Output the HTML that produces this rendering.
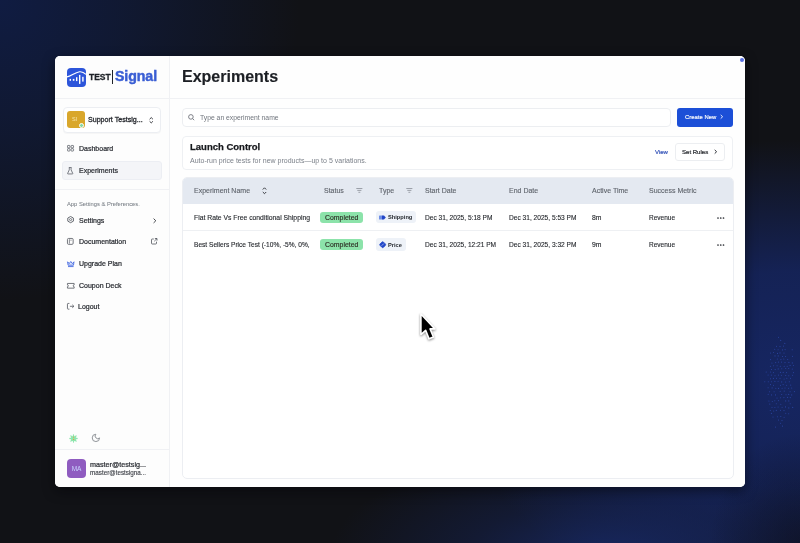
<!DOCTYPE html>
<html><head><meta charset="utf-8">
<style>
*{box-sizing:border-box;margin:0;padding:0}
html,body{width:800px;height:543px;overflow:hidden}
body{font-family:"Liberation Sans",sans-serif;position:relative;background:#111216;color:#25282d}
.bg{position:absolute;inset:0;
background:
radial-gradient(ellipse 90px 110px at 800px 543px, rgba(12,14,28,0.6) 0%, rgba(12,14,28,0) 100%),
radial-gradient(ellipse 300px 300px at 0px 0px, rgba(16,28,66,1) 0%, rgba(16,27,60,0.75) 40%, rgba(17,18,22,0) 100%),
radial-gradient(ellipse 280px 110px at 610px 555px, rgba(24,42,105,0.85) 0%, rgba(22,38,95,0.4) 50%, rgba(22,38,95,0) 100%),
radial-gradient(ellipse 330px 240px at 790px 380px, rgba(22,38,98,1) 0%, rgba(21,36,92,0.9) 45%, rgba(17,18,22,0) 100%),
#111216}
.card{position:absolute;left:55px;top:56px;width:690px;height:431px;background:#fff;border-radius:5px;overflow:hidden;box-shadow:0 4px 12px rgba(5,6,10,0.55)}
.a{position:absolute;white-space:nowrap;line-height:1;will-change:transform}
.side{position:absolute;left:0;top:0;width:115px;height:431px;background:#fdfdfd;border-right:1px solid #f0f1f4}
.hl{position:absolute;height:1px;background:#f0f1f4}
.nav{font-size:7px;color:#2a2d33;-webkit-text-stroke:0.22px #2a2d33;left:23.7px}
.ico{position:absolute;overflow:visible}
.main{position:absolute;left:115px;top:0;width:575px;height:431px;background:#fefefe}
.th{font-size:7px;color:#5f646c;-webkit-text-stroke:0.12px #5f646c;top:131.1px}
.td{font-size:6.8px;color:#26292e;-webkit-text-stroke:0.12px #26292e}
.badge{position:absolute;border-radius:3px}
</style></head>
<body>
<div class="bg"></div>
<svg class="ico" style="left:760px;top:330px" width="40" height="110" viewBox="0 0 40 110"><g fill="rgba(62,98,220,0.5)"><circle cx="18.5" cy="7.3" r="0.55"/><circle cx="20.7" cy="10.4" r="0.55"/><circle cx="24.8" cy="13.4" r="0.55"/><circle cx="16.5" cy="16.3" r="0.55"/><circle cx="20.0" cy="16.6" r="0.55"/><circle cx="23.4" cy="16.1" r="0.55"/><circle cx="14.7" cy="19.3" r="0.55"/><circle cx="18.1" cy="19.7" r="0.55"/><circle cx="22.4" cy="19.9" r="0.55"/><circle cx="25.1" cy="19.6" r="0.55"/><circle cx="32.2" cy="19.8" r="0.55"/><circle cx="10.6" cy="23.0" r="0.55"/><circle cx="13.6" cy="22.5" r="0.55"/><circle cx="17.5" cy="23.4" r="0.55"/><circle cx="20.0" cy="22.9" r="0.55"/><circle cx="24.0" cy="23.0" r="0.55"/><circle cx="15.0" cy="25.9" r="0.55"/><circle cx="18.2" cy="25.9" r="0.55"/><circle cx="22.5" cy="26.5" r="0.55"/><circle cx="25.6" cy="26.5" r="0.55"/><circle cx="32.5" cy="26.2" r="0.55"/><circle cx="10.6" cy="29.6" r="0.55"/><circle cx="17.3" cy="29.0" r="0.55"/><circle cx="20.9" cy="29.6" r="0.55"/><circle cx="23.8" cy="29.0" r="0.55"/><circle cx="27.7" cy="29.5" r="0.55"/><circle cx="11.9" cy="33.0" r="0.55"/><circle cx="15.7" cy="32.6" r="0.55"/><circle cx="18.6" cy="32.1" r="0.55"/><circle cx="21.6" cy="32.1" r="0.55"/><circle cx="25.0" cy="32.6" r="0.55"/><circle cx="28.9" cy="32.4" r="0.55"/><circle cx="32.3" cy="32.9" r="0.55"/><circle cx="10.4" cy="36.2" r="0.55"/><circle cx="13.6" cy="35.8" r="0.55"/><circle cx="17.1" cy="35.8" r="0.55"/><circle cx="20.3" cy="36.2" r="0.55"/><circle cx="24.2" cy="36.2" r="0.55"/><circle cx="27.2" cy="36.2" r="0.55"/><circle cx="30.1" cy="35.4" r="0.55"/><circle cx="33.4" cy="35.5" r="0.55"/><circle cx="11.5" cy="39.5" r="0.55"/><circle cx="15.2" cy="39.5" r="0.55"/><circle cx="18.2" cy="38.9" r="0.55"/><circle cx="21.8" cy="38.7" r="0.55"/><circle cx="25.7" cy="38.5" r="0.55"/><circle cx="28.7" cy="38.5" r="0.55"/><circle cx="32.3" cy="39.0" r="0.55"/><circle cx="6.2" cy="42.0" r="0.55"/><circle cx="10.4" cy="42.0" r="0.55"/><circle cx="13.4" cy="42.6" r="0.55"/><circle cx="20.4" cy="42.4" r="0.55"/><circle cx="23.2" cy="42.4" r="0.55"/><circle cx="26.6" cy="42.6" r="0.55"/><circle cx="33.4" cy="42.6" r="0.55"/><circle cx="8.1" cy="45.0" r="0.55"/><circle cx="11.3" cy="45.1" r="0.55"/><circle cx="15.0" cy="45.7" r="0.55"/><circle cx="18.6" cy="45.1" r="0.55"/><circle cx="21.4" cy="45.2" r="0.55"/><circle cx="25.7" cy="45.5" r="0.55"/><circle cx="28.8" cy="45.8" r="0.55"/><circle cx="32.6" cy="45.3" r="0.55"/><circle cx="10.5" cy="48.8" r="0.55"/><circle cx="13.4" cy="48.4" r="0.55"/><circle cx="16.5" cy="48.2" r="0.55"/><circle cx="20.0" cy="48.3" r="0.55"/><circle cx="24.1" cy="49.0" r="0.55"/><circle cx="26.8" cy="48.3" r="0.55"/><circle cx="30.5" cy="48.3" r="0.55"/><circle cx="4.8" cy="51.7" r="0.55"/><circle cx="8.3" cy="51.8" r="0.55"/><circle cx="11.4" cy="51.8" r="0.55"/><circle cx="14.9" cy="51.4" r="0.55"/><circle cx="18.1" cy="51.3" r="0.55"/><circle cx="21.7" cy="51.9" r="0.55"/><circle cx="25.7" cy="52.0" r="0.55"/><circle cx="29.3" cy="51.7" r="0.55"/><circle cx="10.5" cy="54.6" r="0.55"/><circle cx="13.5" cy="55.3" r="0.55"/><circle cx="20.5" cy="55.2" r="0.55"/><circle cx="23.1" cy="54.6" r="0.55"/><circle cx="26.6" cy="55.3" r="0.55"/><circle cx="30.7" cy="55.1" r="0.55"/><circle cx="8.1" cy="57.8" r="0.55"/><circle cx="12.1" cy="57.9" r="0.55"/><circle cx="15.8" cy="58.2" r="0.55"/><circle cx="18.6" cy="58.4" r="0.55"/><circle cx="22.1" cy="58.3" r="0.55"/><circle cx="25.0" cy="58.0" r="0.55"/><circle cx="28.6" cy="58.3" r="0.55"/><circle cx="31.7" cy="58.0" r="0.55"/><circle cx="9.6" cy="61.8" r="0.55"/><circle cx="14.1" cy="61.8" r="0.55"/><circle cx="20.2" cy="61.2" r="0.55"/><circle cx="24.2" cy="61.1" r="0.55"/><circle cx="30.1" cy="61.7" r="0.55"/><circle cx="34.4" cy="61.6" r="0.55"/><circle cx="8.2" cy="64.2" r="0.55"/><circle cx="11.6" cy="64.9" r="0.55"/><circle cx="15.5" cy="64.9" r="0.55"/><circle cx="21.7" cy="64.5" r="0.55"/><circle cx="26.0" cy="64.7" r="0.55"/><circle cx="28.7" cy="64.4" r="0.55"/><circle cx="31.7" cy="64.9" r="0.55"/><circle cx="17.0" cy="68.0" r="0.55"/><circle cx="20.6" cy="67.8" r="0.55"/><circle cx="23.9" cy="67.6" r="0.55"/><circle cx="27.6" cy="67.4" r="0.55"/><circle cx="30.3" cy="67.6" r="0.55"/><circle cx="8.9" cy="71.0" r="0.55"/><circle cx="12.3" cy="71.5" r="0.55"/><circle cx="14.8" cy="70.7" r="0.55"/><circle cx="18.4" cy="70.6" r="0.55"/><circle cx="25.7" cy="70.9" r="0.55"/><circle cx="28.8" cy="70.9" r="0.55"/><circle cx="9.8" cy="74.1" r="0.55"/><circle cx="16.3" cy="73.7" r="0.55"/><circle cx="20.8" cy="74.2" r="0.55"/><circle cx="30.2" cy="73.8" r="0.55"/><circle cx="12.0" cy="77.2" r="0.55"/><circle cx="14.9" cy="77.5" r="0.55"/><circle cx="18.1" cy="77.0" r="0.55"/><circle cx="22.1" cy="77.3" r="0.55"/><circle cx="25.5" cy="76.9" r="0.55"/><circle cx="28.8" cy="77.9" r="0.55"/><circle cx="32.7" cy="77.4" r="0.55"/><circle cx="10.3" cy="80.5" r="0.55"/><circle cx="13.7" cy="81.0" r="0.55"/><circle cx="16.3" cy="80.4" r="0.55"/><circle cx="20.5" cy="80.3" r="0.55"/><circle cx="24.0" cy="80.6" r="0.55"/><circle cx="11.4" cy="83.4" r="0.55"/><circle cx="25.7" cy="83.3" r="0.55"/><circle cx="28.7" cy="83.7" r="0.55"/><circle cx="13.0" cy="87.0" r="0.55"/><circle cx="17.4" cy="86.7" r="0.55"/><circle cx="20.8" cy="86.5" r="0.55"/><circle cx="24.1" cy="87.3" r="0.55"/><circle cx="18.5" cy="90.0" r="0.55"/><circle cx="22.0" cy="90.6" r="0.55"/><circle cx="20.6" cy="93.3" r="0.55"/><circle cx="15.4" cy="97.1" r="0.55"/><circle cx="22.5" cy="96.1" r="0.55"/></g></svg>
<div class="card">
  <div class="side"></div>
  <div class="main"></div>
  <div class="hl" style="left:0;top:41.9px;width:690px"></div>

  <!-- logo -->
  <svg class="ico" style="left:11.5px;top:11.5px" width="19" height="19" viewBox="0 0 19 19">
    <rect x="0" y="0" width="19" height="19" rx="4" fill="#2d55da"/>
    <path d="M0 8.9 C4 8.4 7.5 4.6 12.5 3.8 C15.5 3.4 17.5 5 19 6.4" stroke="#fff" stroke-width="1.15" fill="none"/>
    <rect x="2.6" y="10.9" width="1.4" height="1.9" fill="#fff"/>
    <rect x="5.8" y="10.9" width="1.6" height="1.9" fill="#fff"/>
    <rect x="9" y="9.2" width="1.4" height="3.9" fill="#fff"/>
    <rect x="12" y="6.9" width="1.4" height="9" fill="#fff"/>
    <rect x="15.2" y="8.8" width="1.4" height="4.8" fill="#fff"/>
  </svg>
  <div class="a" style="left:34.3px;top:16.9px;font-size:8.5px;font-weight:700;color:#1f2329;-webkit-text-stroke:0.3px #1f2329;letter-spacing:-0.05px">TEST</div>
  <div class="a" style="left:56.6px;top:14px;width:1.4px;height:14px;background:#1f2329"></div>
  <div class="a" style="left:60px;top:13.1px;font-size:14.2px;font-weight:700;color:#3a5ed4;-webkit-text-stroke:0.45px #3a5ed4;letter-spacing:-0.1px">Signal</div>

  <!-- workspace -->
  <div class="a" style="left:8.4px;top:51px;width:98px;height:25.8px;border:1px solid #eceef2;border-radius:4px;background:#fff;box-shadow:0 1px 1px rgba(0,0,0,0.03)"></div>
  <div class="a" style="left:11.8px;top:55px;width:17.6px;height:16.8px;border-radius:3px;background:#d9a72c"></div>
  <div class="a" style="left:16.5px;top:60.5px;font-size:5.5px;color:#f6e7b0">SI</div>
  <div class="a" style="left:24.3px;top:66.8px;width:5.4px;height:5.4px;border-radius:50%;background:#86d9a4;border:1px solid #fff"></div>
  <div class="a" style="left:33.2px;top:60.9px;font-size:7.1px;color:#25282d;-webkit-text-stroke:0.28px #25282d">Support Testsig...</div>
  <svg class="ico" style="left:94px;top:60.8px" width="4.5" height="6.5" viewBox="0 0 4.5 6.5">
    <path d="M0.6 2.2 L2.25 0.6 L3.9 2.2 M0.6 4.3 L2.25 5.9 L3.9 4.3" stroke="#2f3238" stroke-width="0.95" fill="none"/>
  </svg>

  <!-- nav -->
  <svg class="ico" style="left:11.8px;top:89.4px" width="7" height="6.5" viewBox="0 0 7 6.5">
    <g stroke="#5c6068" stroke-width="0.8" fill="none">
    <rect x="0.45" y="0.45" width="2.5" height="2.4" rx=".6"/>
    <rect x="4.05" y="0.45" width="2.5" height="2.4" rx=".6"/>
    <rect x="0.45" y="3.65" width="2.5" height="2.4" rx=".6"/>
    <rect x="4.05" y="3.65" width="2.5" height="2.4" rx=".6"/>
    </g>
  </svg>
  <div class="a nav" style="top:89.1px">Dashboard</div>

  <div class="a" style="left:7.3px;top:105.2px;width:99.7px;height:19.3px;border:1px solid #eceef3;border-radius:3px;background:#f4f5f8"></div>
  <svg class="ico" style="left:12.3px;top:110.8px" width="6.4" height="7.4" viewBox="0 0 6.4 7.4">
    <path d="M1.9 0.45 L4.5 0.45 M2.3 0.45 L2.3 2.8 L0.6 6.5 Q0.5 6.95 1 6.95 L5.4 6.95 Q5.9 6.95 5.8 6.5 L4.1 2.8 L4.1 0.45" stroke="#5c6068" stroke-width="0.8" fill="none" stroke-linejoin="round"/>
  </svg>
  <div class="a nav" style="top:111px">Experiments</div>

  <div class="hl" style="left:0;top:132.6px;width:115px"></div>
  <div class="a" style="left:11.8px;top:145.9px;font-size:5.8px;color:#7b8088;-webkit-text-stroke:0.05px #7b8088">App Settings &amp; Preferences.</div>

  <svg class="ico" style="left:11.8px;top:160.4px" width="7.2" height="7.4" viewBox="0 0 7.2 7.4">
    <path d="M3.6 0.5 L6.4 2.05 L6.4 5.15 L3.6 6.7 L0.8 5.15 L0.8 2.05 Z" stroke="#5c6068" stroke-width="0.95" fill="none" stroke-linejoin="round"/>
    <circle cx="3.6" cy="3.6" r="1.05" stroke="#5c6068" stroke-width="0.8" fill="none"/>
  </svg>
  <div class="a nav" style="top:161px">Settings</div>
  <svg class="ico" style="left:98.2px;top:162px" width="3.5" height="5.5" viewBox="0 0 3.5 5.5">
    <path d="M0.6 0.6 L2.8 2.75 L0.6 4.9" stroke="#2f3238" stroke-width="0.9" fill="none"/>
  </svg>

  <svg class="ico" style="left:12.1px;top:181.8px" width="6.6" height="6.8" viewBox="0 0 6.6 6.8">
    <rect x="0.45" y="0.45" width="5.7" height="5.9" rx="1.1" stroke="#5c6068" stroke-width="0.85" fill="none"/>
    <path d="M2.4 1.2 L2.4 5.6 M3.4 2.2 L4.6 2.2" stroke="#5c6068" stroke-width="0.7"/>
  </svg>
  <div class="a nav" style="top:182.2px">Documentation</div>
  <svg class="ico" style="left:96.3px;top:181.8px" width="6.5" height="6.5" viewBox="0 0 6.5 6.5">
    <path d="M2.8 1 L1.2 1 Q0.5 1 0.5 1.7 L0.5 5.3 Q0.5 6 1.2 6 L4.8 6 Q5.5 6 5.5 5.3 L5.5 3.7 M3.3 3.2 L6 0.5 M3.9 0.5 L6 0.5 L6 2.6" stroke="#4f535a" stroke-width="0.8" fill="none"/>
  </svg>

  <svg class="ico" style="left:11.6px;top:204.8px" width="7.6" height="6.2" viewBox="0 0 7.6 6.2">
    <path d="M0.6 0.8 L2.2 2.6 L3.8 0.5 L5.4 2.6 L7 0.8 L6.5 4.2 L1.1 4.2 Z" stroke="#4469e0" stroke-width="0.9" fill="#dfe6fb" stroke-linejoin="round"/>
    <path d="M1 5.6 L6.6 5.6" stroke="#4469e0" stroke-width="0.9"/>
  </svg>
  <div class="a nav" style="top:204.2px">Upgrade Plan</div>

  <svg class="ico" style="left:11.6px;top:226.6px" width="7.6" height="5.6" viewBox="0 0 7.6 5.6">
    <path d="M0.45 0.45 L7.15 0.45 L7.15 1.9 A0.9 0.9 0 0 0 7.15 3.7 L7.15 5.15 L0.45 5.15 L0.45 3.7 A0.9 0.9 0 0 0 0.45 1.9 Z" stroke="#5c6068" stroke-width="0.85" fill="none"/>
  </svg>
  <div class="a nav" style="top:226.2px">Coupon Deck</div>

  <svg class="ico" style="left:11.6px;top:247.4px" width="7.6" height="6.6" viewBox="0 0 7.6 6.6">
    <path d="M2.4 0.45 L1.1 0.45 Q0.45 0.45 0.45 1.1 L0.45 5.5 Q0.45 6.15 1.1 6.15 L2.4 6.15 M2.9 3.3 L6.9 3.3 M5.3 1.8 L6.9 3.3 L5.3 4.8" stroke="#5c6068" stroke-width="0.85" fill="none" stroke-linejoin="round"/>
  </svg>
  <div class="a nav" style="top:247.2px;left:23.2px">Logout</div>

  <!-- theme toggles -->
  <svg class="ico" style="left:13.8px;top:378.4px" width="9" height="9" viewBox="0 0 9 9">
    <g stroke="#8fe6ae" stroke-width="1.3" stroke-linecap="round">
    <path d="M4.5 0.9 V2.2 M4.5 6.8 V8.1 M0.9 4.5 H2.2 M6.8 4.5 H8.1 M1.9 1.9 L2.7 2.7 M6.3 6.3 L7.1 7.1 M7.1 1.9 L6.3 2.7 M2.7 6.3 L1.9 7.1"/>
    </g>
    <circle cx="4.5" cy="4.5" r="2.6" fill="#8fe6ae"/>
    <circle cx="4.6" cy="3.1" r="0.6" fill="#e0a33a"/>
    <circle cx="4.6" cy="5.4" r="0.6" fill="#e0a33a"/>
  </svg>
  <svg class="ico" style="left:36px;top:377.3px" width="9.8" height="9.8" viewBox="0 0 24 24">
    <path d="M12 3a6 6 0 0 0 9 9 9 9 0 1 1-9-9Z" stroke="#8d9197" stroke-width="2.4" fill="none" stroke-linejoin="round"/>
  </svg>
  <div class="hl" style="left:0;top:392.7px;width:115px"></div>

  <!-- user -->
  <div class="a" style="left:11.7px;top:402.7px;width:19px;height:19px;border-radius:4px;background:#8f5cc0"></div>
  <div class="a" style="left:11.7px;top:409.6px;width:19px;text-align:center;font-size:6.5px;color:#c9d3ff;letter-spacing:-0.1px">MA</div>
  <div class="a" style="left:34.5px;top:405.2px;font-size:7.2px;color:#2a2d33;-webkit-text-stroke:0.22px #2a2d33">master@testsig...</div>
  <div class="a" style="left:34.5px;top:414px;font-size:6.3px;color:#3a3d44;-webkit-text-stroke:0.12px #3a3d44">master@testsigna...</div>

  <!-- main header -->
  <div class="a" style="left:127px;top:12.6px;font-size:16px;font-weight:700;color:#1c1f24;-webkit-text-stroke:0.15px #1c1f24">Experiments</div>

  <!-- search -->
  <div class="a" style="left:127.3px;top:51.8px;width:489.3px;height:18.8px;border:1px solid #eceef1;border-radius:4px;background:#fff"></div>
  <svg class="ico" style="left:133px;top:58.3px" width="7" height="7" viewBox="0 0 7 7">
    <circle cx="2.9" cy="2.9" r="2.3" stroke="#6f737a" stroke-width="0.9" fill="none"/>
    <path d="M4.6 4.6 L6.2 6.2" stroke="#6f737a" stroke-width="0.9"/>
  </svg>
  <div class="a" style="left:145.2px;top:58.5px;font-size:6.8px;color:#71767e">Type an experiment name</div>

  <div class="a" style="left:622px;top:52px;width:56.4px;height:18.8px;border-radius:3px;background:#1c4fd7"></div>
  <div class="a" style="left:629.5px;top:59.1px;font-size:5.95px;color:#fff;-webkit-text-stroke:0.15px #fff">Create New</div>
  <svg class="ico" style="left:665px;top:58.3px" width="3.5" height="5.5" viewBox="0 0 3.5 5.5">
    <path d="M0.7 0.9 L2.6 2.75 L0.7 4.6" stroke="#fff" stroke-width="0.9" fill="none"/>
  </svg>

  <!-- launch control -->
  <div class="a" style="left:126.8px;top:79.5px;width:551.2px;height:33.7px;border:1px solid #eef0f3;border-radius:4px;background:#fff"></div>
  <div class="a" style="left:135px;top:85.9px;font-size:9.5px;font-weight:700;color:#16181c;-webkit-text-stroke:0.25px #16181c">Launch Control</div>
  <div class="a" style="left:135px;top:100.9px;font-size:7px;color:#7b8089">Auto-run price tests for new products—up to 5 variations.</div>
  <div class="a" style="left:599.8px;top:93.3px;font-size:6px;color:#3453b8;-webkit-text-stroke:0.2px #3453b8">View</div>
  <div class="a" style="left:620.4px;top:87.2px;width:49.6px;height:17.8px;border:1px solid #eceef1;border-radius:3px;background:#fff"></div>
  <div class="a" style="left:626.9px;top:93.4px;font-size:6.05px;color:#1f2227;-webkit-text-stroke:0.2px #1f2227">Set Rules</div>
  <svg class="ico" style="left:659px;top:93px" width="3.5" height="5.5" viewBox="0 0 3.5 5.5">
    <path d="M0.7 0.9 L2.6 2.75 L0.7 4.6" stroke="#2a2d33" stroke-width="1" fill="none"/>
  </svg>

  <!-- table -->
  <div class="a" style="left:126.5px;top:121.2px;width:551.5px;height:301.5px;border:1px solid #eceef2;border-radius:5px;background:#fff;overflow:hidden">
    <div style="position:absolute;left:0;top:0;width:100%;height:25.8px;background:#e4e9f1"></div>
    <div style="position:absolute;left:0;top:51.6px;width:100%;height:1px;background:#eef0f3"></div>
    
  </div>
  <div class="a th" style="left:139px">Experiment Name</div>
  <svg class="ico" style="left:207.4px;top:131px" width="5" height="7.5" viewBox="0 0 5 7.5">
    <path d="M0.8 2.5 L2.5 0.8 L4.2 2.5 M0.8 5 L2.5 6.7 L4.2 5" stroke="#2f3238" stroke-width="0.95" fill="none"/>
  </svg>
  <div class="a th" style="left:268.6px">Status</div>
  <svg class="ico" style="left:301px;top:132.3px" width="6.7" height="5" viewBox="0 0 6.7 5">
    <path d="M0.3 0.5 H6.4 M1.3 2.4 H5.4 M2.4 4.3 H4.3" stroke="#7b8089" stroke-width="0.7"/>
  </svg>
  <div class="a th" style="left:323.8px">Type</div>
  <svg class="ico" style="left:350.8px;top:132.3px" width="6.7" height="5" viewBox="0 0 6.7 5">
    <path d="M0.3 0.5 H6.4 M1.3 2.4 H5.4 M2.4 4.3 H4.3" stroke="#7b8089" stroke-width="0.7"/>
  </svg>
  <div class="a th" style="left:369.5px">Start Date</div>
  <div class="a th" style="left:453.5px">End Date</div>
  <div class="a th" style="left:537.4px">Active Time</div>
  <div class="a th" style="left:594.4px">Success Metric</div>

  <!-- row 1 -->
  <div class="a td" style="left:139px;top:159.2px">Flat Rate Vs Free conditional Shipping</div>
  <div class="badge" style="left:264.7px;top:156.2px;width:43.8px;height:11px;background:#8ce3aa"></div>
  <div class="a" style="left:269.7px;top:158.6px;font-size:6.9px;color:#2e3026;-webkit-text-stroke:0.15px #2e3026">Completed</div>
  <div class="badge" style="left:320.7px;top:155.3px;width:40.3px;height:12.2px;background:#eef2f8"></div>
  <svg class="ico" style="left:324px;top:158.5px" width="7" height="5" viewBox="0 0 7 5">
    <rect x="0" y="0.5" width="3.5" height="4" rx="0.6" fill="#6f8fe6"/>
    <path d="M3 0.5 H5 L6.8 2.5 L5 4.5 H3 Z" fill="#2247c8"/>
  </svg>
  <div class="a" style="left:332.8px;top:159.4px;font-size:5.7px;font-weight:700;color:#1f2329">Shipping</div>
  <div class="a td" style="left:369.5px;top:159.2px;font-size:6.6px">Dec 31, 2025, 5:18 PM</div>
  <div class="a td" style="left:453.5px;top:159.2px;font-size:6.6px">Dec 31, 2025, 5:53 PM</div>
  <div class="a td" style="left:537.4px;top:159.2px">8m</div>
  <div class="a td" style="left:594.4px;top:159.2px;font-size:6.5px">Revenue</div>
  <svg class="ico" style="left:662px;top:160.6px" width="7.5" height="2" viewBox="0 0 7.5 2">
    <circle cx="1" cy="1" r="0.85" fill="#2a2d33"/><circle cx="3.75" cy="1" r="0.85" fill="#2a2d33"/><circle cx="6.5" cy="1" r="0.85" fill="#2a2d33"/>
  </svg>

  <!-- row 2 -->
  <div class="a td" style="left:139px;top:186.4px;font-size:6.6px">Best Sellers Price Test (-10%, -5%, 0%,</div>
  <div class="badge" style="left:264.7px;top:183.2px;width:43.8px;height:11.2px;background:#8ce3aa"></div>
  <div class="a" style="left:269.7px;top:185.7px;font-size:6.9px;color:#2e3026;-webkit-text-stroke:0.15px #2e3026">Completed</div>
  <div class="badge" style="left:320.7px;top:182.4px;width:30.1px;height:12.5px;background:#eef2f8"></div>
  <svg class="ico" style="left:323.6px;top:185.1px" width="7.4" height="7.4" viewBox="0 0 7.4 7.4">
    <rect x="1.3" y="1.3" width="4.8" height="4.8" rx="1.2" transform="rotate(45 3.7 3.7)" fill="#2247c8" stroke="#2247c8" stroke-width="0.8"/>
    <path d="M2.6 4.8 L4.8 2.6" stroke="#dfe6ff" stroke-width="0.6"/>
  </svg>
  <div class="a" style="left:332.8px;top:186.5px;font-size:5.7px;font-weight:700;color:#1f2329">Price</div>
  <div class="a td" style="left:369.5px;top:186.4px;font-size:6.6px">Dec 31, 2025, 12:21 PM</div>
  <div class="a td" style="left:453.5px;top:186.4px;font-size:6.6px">Dec 31, 2025, 3:32 PM</div>
  <div class="a td" style="left:537.4px;top:186.4px">9m</div>
  <div class="a td" style="left:594.4px;top:186.4px;font-size:6.5px">Revenue</div>
  <svg class="ico" style="left:662px;top:187.6px" width="7.5" height="2" viewBox="0 0 7.5 2">
    <circle cx="1" cy="1" r="0.85" fill="#2a2d33"/><circle cx="3.75" cy="1" r="0.85" fill="#2a2d33"/><circle cx="6.5" cy="1" r="0.85" fill="#2a2d33"/>
  </svg>

  <!-- corner dot -->
  <div class="a" style="left:684.5px;top:1.9px;width:3.8px;height:3.8px;border-radius:50%;background:#5b72e2"></div>
</div>

<!-- cursor -->
<svg class="ico" style="left:416px;top:310px;filter:drop-shadow(0.5px 1px 1px rgba(0,0,0,0.45))" width="22" height="32" viewBox="0 0 22 32">
  <path d="M4.90 4.00 L4.90 24.57 L9.65 20.38 L13.04 28.86 L17.44 27.05 L14.05 18.92 L18.91 18.92 Z" fill="#000" stroke="#fff" stroke-width="1.6" stroke-linejoin="round"/>
</svg>
</body></html>
